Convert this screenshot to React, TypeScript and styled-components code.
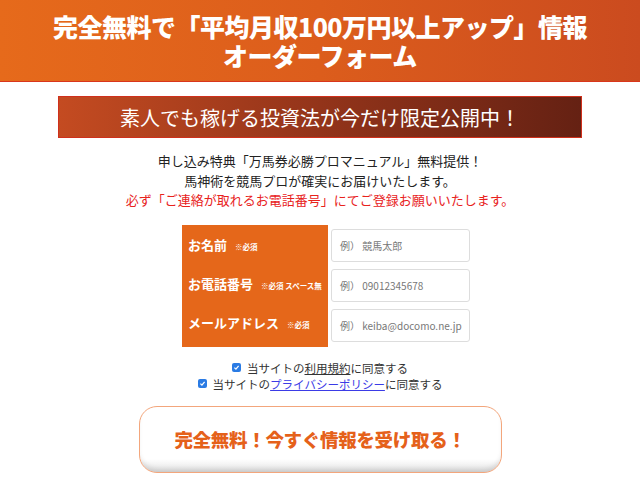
import styled, { createGlobalStyle } from "styled-components"

const Global = createGlobalStyle`
    body {
        margin: 0;
        background: #fff;
        font-family: "Noto Sans CJK JP", "Noto Sans", sans-serif;
        color: #222;
    }
`

const Header = styled.header`
    height: 81px;
    border-bottom: 1px solid #d9361c;
    background: linear-gradient(90deg, #e66a1b 0%, #dc5d1c 50%, #cb4b1f 100%);
    display: flex;
    flex-direction: column;
    align-items: center;
    justify-content: center;
    color: #fff;
    font-weight: 900;
    font-size: 25px;
    letter-spacing: -0.5px;
`

const HeadLine = styled.div`
    line-height: 29px;
    height: 29px;
    overflow: visible;
`

const Banner = styled.div`
    margin: 14px auto 0;
    width: 522px;
    height: 40px;
    border: 1px solid #d0301c;
    background: linear-gradient(90deg, #c44b21 0%, #93341a 50%, #652113 100%);
    color: #fff;
    font-size: 20px;
    display: flex;
    align-items: center;
    justify-content: center;
    font-weight: 400;
`

const Intro = styled.div`
    margin-top: 13px;
    text-align: center;
    font-size: 13px;
    line-height: 19.5px;
`

const Warning = styled.div`
    color: #e8221c;
`

const Form = styled.div`
    display: flex;
    justify-content: center;
    margin-top: 15px;
    margin-left: 12px;
`

const Labels = styled.div`
    width: 146px;
    height: 122px;
    background: #e5671a;
    display: flex;
    flex-direction: column;
    justify-content: space-around;
    padding: 0 0 4px 6px;
    box-sizing: border-box;
`

const Label = styled.div`
    color: #fff;
    font-weight: 700;
    font-size: 13px;
    display: flex;
    align-items: baseline;
    gap: 8px;
`

const Note = styled.span`
    font-size: 7.5px;
    font-weight: 700;
`

const Inputs = styled.div`
    display: flex;
    flex-direction: column;
    gap: 7px;
    padding: 4px 0 0 3px;
`

const Input = styled.div`
    width: 139px;
    height: 33px;
    box-sizing: border-box;
    border: 1px solid #ddd;
    border-radius: 3px;
    background: #fff;
    display: flex;
    align-items: center;
    padding-left: 8px;
    font-size: 10px;
    color: #777;
    white-space: pre;
    overflow: hidden;
    font-family: "Noto Sans CJK JP", "Open Sans", sans-serif;
`

const Checks = styled.div`
    margin-top: 13px;
    display: flex;
    flex-direction: column;
    align-items: center;
    font-size: 11.5px;
    line-height: 16px;
`

const CheckRow = styled.label`
    display: flex;
    align-items: center;
    color: #333;
`

const Box = styled.span`
    width: 9px;
    height: 9px;
    border-radius: 2px;
    background: #2a7be4;
    display: inline-flex;
    align-items: center;
    justify-content: center;
    margin-right: 6px;
`

const Terms = styled.span<{ $link?: boolean }>`
    text-decoration: underline;
    color: ${p => (p.$link ? "#3b3be6" : "#333")};
`

const Submit = styled.button`
    display: flex;
    align-items: center;
    justify-content: center;
    margin: 14px auto 0;
    width: 363px;
    height: 67px;
    border: 1px solid #f3a67c;
    border-radius: 18px;
    background: linear-gradient(180deg, #fff 0%, #fff 80%, #e4e4e4 100%);
    box-shadow: inset 0 -5px 5px -2px rgba(0, 0, 0, 0.12);
    color: #e5611a;
    font-family: "Noto Sans CJK JP", sans-serif;
    font-weight: 900;
    font-size: 18.5px;
    letter-spacing: -0.3px;
    cursor: pointer;
`

const Tick = () => (
    <svg width="7" height="7" viewBox="0 0 10 10">
        <path d="M2 5.2 L4.2 7.4 L8 2.8" stroke="#fff" strokeWidth="1.8" fill="none" />
    </svg>
)

export default function App() {
    return (
        <>
            <Global />
            <Header>
                <HeadLine>完全無料で「平均月収100万円以上アップ」情報</HeadLine>
                <HeadLine>オーダーフォーム</HeadLine>
            </Header>
            <Banner>素人でも稼げる投資法が今だけ限定公開中！</Banner>
            <Intro>
                <div>申し込み特典「万馬券必勝プロマニュアル」無料提供！</div>
                <div>馬神術を競馬プロが確実にお届けいたします。</div>
                <Warning>必ず「ご連絡が取れるお電話番号」にてご登録お願いいたします。</Warning>
            </Intro>
            <Form>
                <Labels>
                    <Label>お名前<Note>※必須</Note></Label>
                    <Label>お電話番号<Note>※必須 スペース無</Note></Label>
                    <Label>メールアドレス<Note>※必須</Note></Label>
                </Labels>
                <Inputs>
                    <Input>例） 競馬太郎</Input>
                    <Input>例） 09012345678</Input>
                    <Input>例） keiba@docomo.ne.jp</Input>
                </Inputs>
            </Form>
            <Checks>
                <CheckRow><Box><Tick /></Box>当サイトの<Terms>利用規約</Terms>に同意する</CheckRow>
                <CheckRow><Box><Tick /></Box>当サイトの<Terms $link>プライバシーポリシー</Terms>に同意する</CheckRow>
            </Checks>
            <Submit>完全無料！今すぐ情報を受け取る！</Submit>
        </>
    )
}
